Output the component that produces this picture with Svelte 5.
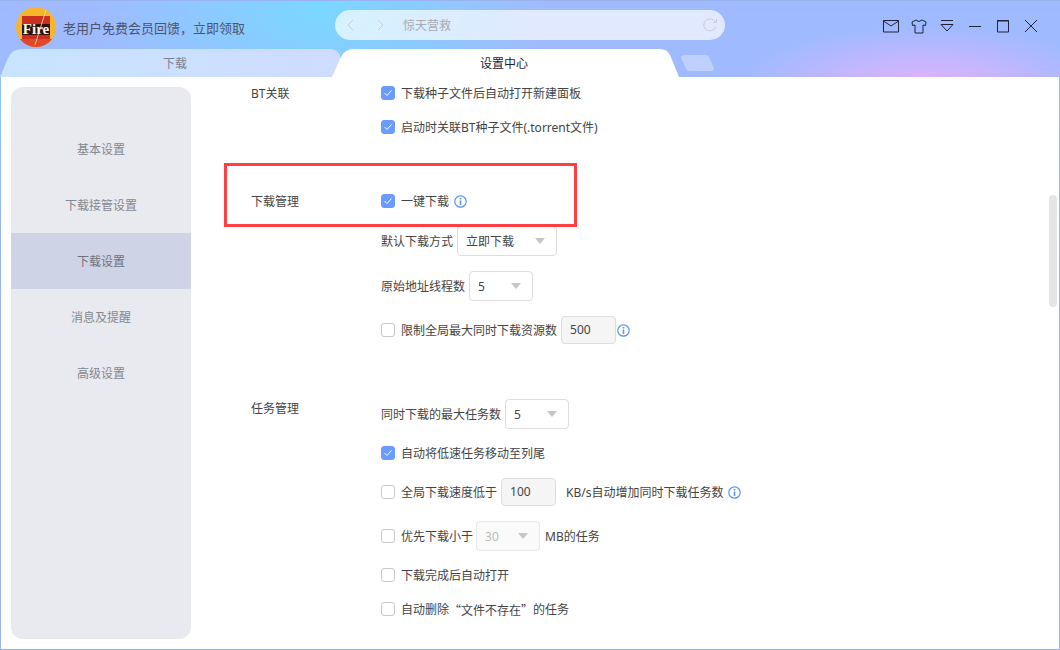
<script>
  const menu = ['基本设置', '下载接管设置', '下载设置', '消息及提醒', '高级设置'];
  const active = 2;
</script>

<div class="app">
  <header>
    <div class="top">
      <svg class="logo" width="40" height="40" viewBox="0 0 40 40">
        <defs>
          <clipPath id="round"><circle cx="20" cy="20" r="20" /></clipPath>
        </defs>
        <g clip-path="url(#round)">
          <rect width="40" height="40" fill="#f6b62c" />
          <path d="M6 9H34V32H6Z" fill="#c9301f" />
          <path d="M6 17H34V28H6Z" fill="#34100a" />
          <path d="M0 32H40V40H0Z" fill="#e2482a" />
          <path d="M31 0L19 38" stroke="#ffe3b0" stroke-width="0.8" />
          <text x="20" y="27" text-anchor="middle" class="fire">Fire</text>
        </g>
      </svg>
      <span class="promo">老用户免费会员回馈，立即领取</span>
      <div class="search">
        <svg width="12" height="14" viewBox="0 0 12 14" class="nav"><path d="M8 2L3 7L8 12" /></svg>
        <svg width="12" height="14" viewBox="0 0 12 14" class="nav next"><path d="M4 2L9 7L4 12" /></svg>
        <span class="query">惊天营救</span>
        <svg width="16" height="16" viewBox="0 0 16 16" class="reload">
          <path d="M13.6 9.5A6 6 0 1 1 12 3.6L14 5.4" />
          <path d="M14.5 2V5.6H11" />
        </svg>
      </div>
      <div class="winbtns">
        <span class="wb"><svg width="16" height="14" viewBox="0 0 16 14"><path d="M0.5 1.5H15.5V13H0.5Z M0.5 2L8 7L15.5 2" /></svg></span>
        <span class="wb"><svg width="16" height="15" viewBox="0 0 16 15"><path d="M5 1L8 2.6L11 1L15 3L14.5 6.5L12 6V14H4V6L1.5 6.5L1 3Z" /></svg></span>
        <span class="wb"><svg width="14" height="14" viewBox="0 0 14 14"><path d="M1 1.5H13 M1 5.5H13L7 12Z" /></svg></span>
        <span class="wb"><svg width="14" height="14" viewBox="0 0 14 14"><path d="M1 7.5H13" /></svg></span>
        <span class="wb"><svg width="14" height="14" viewBox="0 0 14 14"><path d="M1.5 1.5H12.5V13H1.5Z" /><path d="M1 2H13" stroke-width="2.5" /></svg></span>
        <span class="wb"><svg width="14" height="14" viewBox="0 0 14 14"><path d="M1 1L13 13 M13 1L1 13" /></svg></span>
      </div>
    </div>
    <div class="tabs">
      <div class="tab inactive">下载</div>
      <div class="tab current">设置中心</div>
      <svg class="newtab" width="33" height="16" viewBox="0 0 33 16"><path d="M3 0H24Q27 0 28 2L33 13Q33 16 30 16H9Q6 16 5 14L0 3Q0 0 3 0Z" /></svg>
    </div>
  </header>

  <main>
    <nav>
      {#each menu as item, i}
        <div class="item" class:on={i === active}>{item}</div>
      {/each}
    </nav>

    <div class="content">
      <section class="sec-bt">
        <div class="title">BT关联</div>
        <div class="opts">
          <div class="row"><span class="cb checked"><svg width="10" height="10" viewBox="0 0 10 10"><path d="M1.5 5L4 7.5L8.5 2.5" /></svg></span>下载种子文件后自动打开新建面板</div>
          <div class="row gap4"><span class="cb checked"><svg width="10" height="10" viewBox="0 0 10 10"><path d="M1.5 5L4 7.5L8.5 2.5" /></svg></span>启动时关联BT种子文件(.torrent文件)</div>
        </div>
      </section>

      <section class="sec-dl">
        <div class="title">下载管理</div>
        <div class="opts">
          <div class="row"><span class="cb checked"><svg width="10" height="10" viewBox="0 0 10 10"><path d="M1.5 5L4 7.5L8.5 2.5" /></svg></span>一键下载<svg class="info" width="13" height="13" viewBox="0 0 13 13"><circle cx="6.5" cy="6.5" r="5.7" /><path d="M6.5 5.5V10 M6.5 3V4.4" /></svg></div>
          <div class="row gap10">默认下载方式<span class="select w100"><span>立即下载</span><i></i></span></div>
          <div class="row gap15">原始地址线程数<span class="select w64"><span>5</span><i></i></span></div>
          <div class="row gap14"><span class="cb"></span>限制全局最大同时下载资源数<span class="input">500</span><svg class="info tight" width="13" height="13" viewBox="0 0 13 13"><circle cx="6.5" cy="6.5" r="5.7" /><path d="M6.5 5.5V10 M6.5 3V4.4" /></svg></div>
        </div>
      </section>

      <section class="sec-task">
        <div class="title shifted">任务管理</div>
        <div class="opts">
          <div class="row">同时下载的最大任务数<span class="select w64"><span>5</span><i></i></span></div>
          <div class="row gap9"><span class="cb checked"><svg width="10" height="10" viewBox="0 0 10 10"><path d="M1.5 5L4 7.5L8.5 2.5" /></svg></span>自动将低速任务移动至列尾</div>
          <div class="row gap9"><span class="cb"></span>全局下载速度低于<span class="input">100</span><span class="unit">KB/s自动增加同时下载任务数</span><svg class="info" width="13" height="13" viewBox="0 0 13 13"><circle cx="6.5" cy="6.5" r="5.7" /><path d="M6.5 5.5V10 M6.5 3V4.4" /></svg></div>
          <div class="row gap14"><span class="cb"></span>优先下载小于<span class="select w64 disabled"><span>30</span><i></i></span><span class="after">MB的任务</span></div>
          <div class="row gap9"><span class="cb"></span>下载完成后自动打开</div>
          <div class="row gap4"><span class="cb"></span>自动删除<span class="cjk">“文件不存在”</span>的任务</div>
        </div>
      </section>
    </div>

    <div class="scrollbar"></div>
    <div class="highlight"></div>
  </main>
</div>

<style>
  :global(body) {
    margin: 0;
    font-family: "Noto Sans", "Noto Sans CJK SC", sans-serif;
  }

  .app {
    position: relative;
    width: 1060px;
    height: 650px;
    overflow: hidden;
    box-sizing: border-box;
    padding: 0 1px 1px;
    background: linear-gradient(180deg, #86caff 0, #9ab4f0 40%, #9ab4f0 100%);
  }

  header {
    height: 77px;
    margin: 0 -1px;
    box-sizing: border-box;
    border-top: 1px solid #9ab4f0;
    background:
      radial-gradient(ellipse 190px 62px at 925px 88px, #e5b2ff 0, rgba(229, 178, 255, 0) 100%),
      radial-gradient(ellipse 230px 130px at 320px 8px, #7ad8ff 0, rgba(122, 216, 255, 0) 100%),
      #a0baff;
  }

  .top {
    display: flex;
    align-items: flex-start;
    height: 48px;
    padding-left: 16px;
  }

  .logo {
    margin-top: 6px;
    flex: none;
  }

  .fire {
    font: bold 15px "Liberation Serif", serif;
    fill: #fff6e0;
  }

  .promo {
    margin: 17px 0 0 7px;
    width: 182px;
    font-size: 13px;
    line-height: 20px;
    color: #4d5470;
    white-space: nowrap;
  }

  .search {
    display: flex;
    align-items: center;
    width: 390px;
    height: 30px;
    margin: 9px 0 0 90px;
    border-radius: 15px;
    background: rgba(255, 255, 255, 0.68);
    box-sizing: border-box;
    padding: 0 7px 0 10px;
  }

  .nav path {
    fill: none;
    stroke: #c8ced8;
    stroke-width: 1;
  }

  .nav.next {
    margin-left: 17px;
  }

  .query {
    margin-left: 17px;
    font-size: 12px;
    color: #a9abb2;
  }

  .reload {
    margin-left: auto;
  }

  .reload path {
    fill: none;
    stroke: #c9cdd6;
    stroke-width: 1;
  }

  .winbtns {
    display: flex;
    margin-left: auto;
    padding-right: 15px;
    margin-top: 18px;
  }

  .wb {
    display: flex;
    justify-content: center;
    width: 28px;
    height: 16px;
  }

  .wb path {
    fill: none;
    stroke: #20243a;
    stroke-width: 1;
  }

  .tabs {
    display: flex;
    align-items: flex-start;
    height: 28px;
  }

  .tab {
    flex: none;
    height: 28px;
    font-size: 12px;
    line-height: 29px;
    text-align: center;
    box-sizing: border-box;
  }

  .inactive {
    width: 343px;
    padding-left: 7px;
    color: #7d8290;
    background: linear-gradient(90deg, #c8e4ff, #cfdcff);
    clip-path: path("M0 28L8 9Q12 0 22 0H330Q337 0 340 6L343 28Z");
  }

  .current {
    width: 347px;
    margin-left: -11px;
    padding-right: 3px;
    color: #1f2430;
    background: #fff;
    clip-path: path("M0 28L9 8Q13 0 22 0H328Q335 0 338 6L347 28Z");
  }

  .newtab {
    margin: 6px 0 0 2px;
  }

  .newtab path {
    fill: #bed0fb;
  }

  main {
    position: relative;
    display: flex;
    height: 572px;
    background: #fff;
    overflow: hidden;
  }

  nav {
    flex: none;
    width: 180px;
    height: 552px;
    margin: 10px 0 0 10px;
    padding-top: 34px;
    box-sizing: border-box;
    border-radius: 12px;
    background: #e9eaf0;
  }

  .item {
    height: 56px;
    line-height: 58px;
    text-align: center;
    font-size: 12px;
    color: #85878f;
  }

  .item.on {
    background: #ced3e6;
    color: #6f7280;
  }

  .content {
    flex: 1;
    padding: 1px 0 0 60px;
    font-size: 12px;
    color: #444;
  }

  section {
    display: flex;
  }

  .sec-dl {
    margin-top: 44px;
  }

  .sec-task {
    margin-top: 54px;
  }

  .title {
    flex: none;
    width: 130px;
    line-height: 32px;
    color: #444;
  }

  .title.shifted {
    line-height: 20px;
  }

  .row {
    display: flex;
    align-items: center;
    height: 30px;
    white-space: nowrap;
  }

  .gap4 { margin-top: 4px; }
  .gap9 { margin-top: 9px; }
  .gap10 { margin-top: 10px; }
  .gap14 { margin-top: 14px; }
  .gap15 { margin-top: 15px; }

  .cb {
    display: flex;
    align-items: center;
    justify-content: center;
    flex: none;
    width: 14px;
    height: 14px;
    margin-right: 6px;
    box-sizing: border-box;
    border: 1px solid #c8c8c8;
    border-radius: 3px;
    background: #fff;
  }

  .cb.checked {
    border-color: #6b9bff;
    background: #6b9bff;
  }

  .cb path {
    fill: none;
    stroke: #fff;
    stroke-width: 1;
  }

  .cjk {
    font-family: "Noto Sans CJK SC", sans-serif;
  }

  .info {
    flex: none;
    margin-left: 5px;
  }

  .info.tight {
    margin-left: 1px;
  }

  .info circle, .info path {
    fill: none;
    stroke: #5b94f2;
    stroke-width: 1.2;
  }

  .info path {
    stroke-width: 1.6;
  }

  .select {
    display: flex;
    align-items: center;
    justify-content: space-between;
    flex: none;
    height: 30px;
    margin-left: 4px;
    padding: 0 11px 0 8px;
    box-sizing: border-box;
    border: 1px solid #ddd;
    border-radius: 4px;
    color: #444;
  }

  .select i {
    width: 0;
    height: 0;
    border-left: 5.5px solid transparent;
    border-right: 5.5px solid transparent;
    border-top: 6px solid #c6c6c6;
  }

  .select.disabled {
    margin-left: 3px;
    background: #fafafa;
    border-color: #e8e8e8;
    color: #bbb;
  }

  .w100 { width: 100px; }
  .w64 { width: 64px; }

  .input {
    flex: none;
    width: 55px;
    height: 28px;
    margin-left: 4px;
    padding-left: 8px;
    box-sizing: border-box;
    border: 1px solid #ddd;
    border-radius: 4px;
    background: #f5f5f5;
    line-height: 26px;
    color: #444;
  }

  .unit {
    margin-left: 10px;
  }

  .after {
    margin-left: 5px;
  }

  .scrollbar {
    position: absolute;
    top: 118px;
    right: 2px;
    width: 8px;
    height: 112px;
    border-radius: 4px;
    background: #e5e5e5;
  }

  .highlight {
    position: absolute;
    left: 223px;
    top: 86px;
    width: 353px;
    height: 64px;
    box-sizing: border-box;
    border: 3px solid #ff4043;
    pointer-events: none;
  }
</style>
